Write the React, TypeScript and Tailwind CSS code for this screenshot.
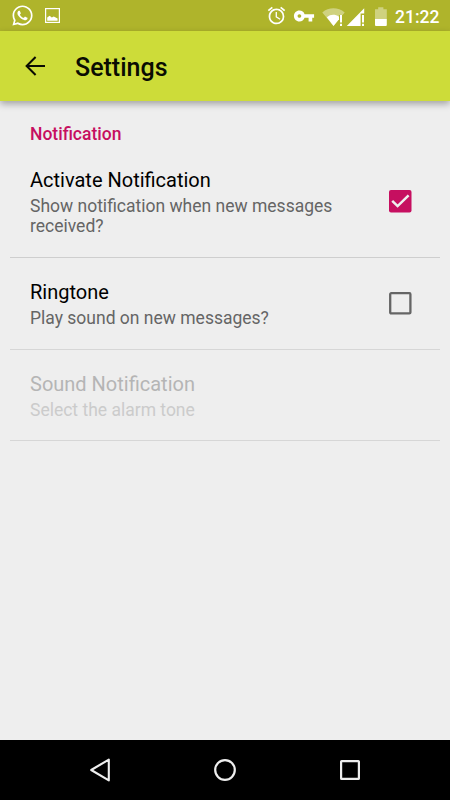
import { useState } from 'react';
import { FaWhatsapp } from 'react-icons/fa';
import { MdAlarm, MdVpnKey } from 'react-icons/md';

type CheckBoxProps = {
  checked: boolean;
  label: string;
  onChange: () => void;
};

function StatusBar() {
  return (
    <div className="flex h-[31px] shrink-0 items-center bg-[#afb42b] pl-3 pr-2.5 text-white">
      <FaWhatsapp className="h-[23px] w-[23px] -translate-x-px" />
      <svg className="ml-[10px] h-[15px] w-[15px]" viewBox="0 0 15 15">
        <rect x="0.6" y="0.6" width="13.8" height="13.8" fill="none" stroke="currentColor" strokeWidth="1.2" />
        <path d="M2.2 12.8V9.4L4.6 7.8l2.2 1.6 2-1 3.8 2v2.4z" fill="currentColor" />
      </svg>
      <div className="ml-auto flex items-center">
        <MdAlarm className="h-[21px] w-[21px] translate-x-px" />
        <MdVpnKey className="ml-[7px] h-[22px] w-[22px]" />
        {/* wifi, signal and battery */}
        <svg className="ml-[5px] h-[22px] w-[70px]" viewBox="320 4 70 22">
          <path d="M322.3 11.4C328.6 6 338.2 6 344.7 11.4L342.6 14H339V18.2L333.5 25z" fill="#fff" fillOpacity="0.4" />
          <path d="M326.8 16.3c3.8-3.2 8.2-3.2 12.2-.6v2.6L333.5 25z" fill="#fff" />
          <path d="M340 14h2v7.5h-2zM340 22.8h2v2.2h-2z" fill="#fff" />
          <path d="M346.8 25L364.2 7.2V12.4H360.6V25z" fill="#fff" />
          <path d="M362 14h2v7.5h-2zM362 22.8h2v2.2h-2z" fill="#fff" />
          <path d="M375 8.3h3.2V6.2h5.2v2.1h3.4V18H375z" fill="#fff" fillOpacity="0.4" />
          <path d="M375 18h11.8v5.9q0 1-1 1H376q-1 0-1-1z" fill="#fff" />
        </svg>
        <span className="ml-[5px] w-[45px] pt-[2px] text-[17.5px] font-medium leading-5">21:22</span>
      </div>
    </div>
  );
}

function Toolbar() {
  return (
    <header className="z-10 flex h-[70px] shrink-0 items-center bg-[#cddc39] pl-5 text-[#0a0c02] shadow-[0_3px_7px_rgba(0,0,0,0.32)]">
      <button type="button" aria-label="Back">
        <svg className="h-[30px] w-[30px]" viewBox="0 0 30 30">
          <path d="M25 15H7M15.6 6l-9 9 9 9" fill="none" stroke="currentColor" strokeWidth="2" />
        </svg>
      </button>
      <h1 className="ml-[25px] pt-[3px] text-[25px] font-medium leading-8">Settings</h1>
    </header>
  );
}

function CheckBox({ checked, label, onChange }: CheckBoxProps) {
  return (
    <button type="button" role="checkbox" aria-checked={checked} aria-label={label} onClick={onChange}>
      {checked ? (
        <svg className="h-[23px] w-[23px]" viewBox="0 0 23 23">
          <rect width="22.5" height="22.5" rx="2" fill="#c60f60" />
          <path d="M3.2 10.8l5.4 5.3L19.6 5.3" fill="none" stroke="#eee" strokeWidth="2.5" />
        </svg>
      ) : (
        <svg className="h-[23px] w-[23px]" viewBox="0 0 23 23">
          <rect x="1.2" y="1.2" width="20.2" height="20.2" rx="1" fill="none" stroke="#656565" strokeWidth="2.3" />
        </svg>
      )}
    </button>
  );
}

function NavigationBar() {
  return (
    <nav className="flex h-[60px] shrink-0 items-center justify-between bg-black px-[87px] text-[#eee]">
      <button type="button" aria-label="Back">
        <svg className="h-[26px] w-[26px]" viewBox="0 0 26 26">
          <path d="M4.2 13L21.8 2.6v20.8z" fill="none" stroke="currentColor" strokeWidth="2.1" strokeLinejoin="round" />
        </svg>
      </button>
      <button type="button" aria-label="Home">
        <svg className="h-[26px] w-[26px]" viewBox="0 0 26 26">
          <circle cx="13" cy="13" r="9.8" fill="none" stroke="currentColor" strokeWidth="2.2" />
        </svg>
      </button>
      <button type="button" aria-label="Recent apps">
        <svg className="h-[26px] w-[26px]" viewBox="0 0 26 26">
          <rect x="4.1" y="4.1" width="17.8" height="17.8" rx="0.5" fill="none" stroke="currentColor" strokeWidth="2.2" />
        </svg>
      </button>
    </nav>
  );
}

function App() {
  const [notify, setNotify] = useState(true);
  const [ringtone, setRingtone] = useState(false);

  return (
    <div className="flex h-[800px] w-[450px] flex-col overflow-hidden bg-[#eee] font-['Roboto',sans-serif]">
      <StatusBar />
      <Toolbar />
      <main className="flex-1 px-2.5">
        <h2 className="h-[45px] px-5 pt-[23px] text-[17.5px] font-medium leading-[21px] text-[#c60f60]">
          Notification
        </h2>
        <section className="flex h-[112px] items-center border-b border-[#cecece] pl-5 pr-[28px]">
          <div className="w-[320px] pt-px">
            <h3 className="text-[20px] leading-6 text-black">Activate Notification</h3>
            <p className="mt-1 text-[17.5px] leading-[20.5px] text-[#656565]">
              Show notification when new messages received?
            </p>
          </div>
          <div className="ml-auto flex">
            <CheckBox checked={notify} label="Activate Notification" onChange={() => setNotify(!notify)} />
          </div>
        </section>
        <section className="flex h-[92px] items-center border-b border-[#d6d6d6] pl-5 pr-[28px]">
          <div className="pt-[2px]">
            <h3 className="text-[20px] leading-6 text-black">Ringtone</h3>
            <p className="mt-1 text-[17.5px] leading-[21px] text-[#656565]">Play sound on new messages?</p>
          </div>
          <div className="ml-auto flex">
            <CheckBox checked={ringtone} label="Ringtone" onChange={() => setRingtone(!ringtone)} />
          </div>
        </section>
        <section className="flex h-[91px] items-center border-b border-[#d6d6d6] pl-5">
          <div className="pt-[3px]">
            <h3 className="text-[20px] leading-6 text-[#b5b5b5]">Sound Notification</h3>
            <p className="mt-1 text-[17.5px] leading-[21px] text-[#cbcbcb]">Select the alarm tone</p>
          </div>
        </section>
      </main>
      <NavigationBar />
    </div>
  );
}

export default App;
